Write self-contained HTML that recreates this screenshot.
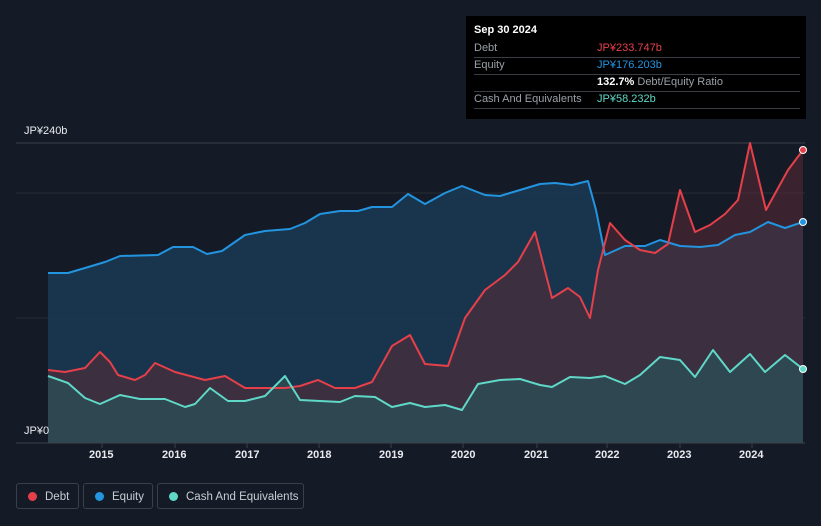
<!DOCTYPE html>
<html><head><style>
body{margin:0;background:#151b26;font-family:"Liberation Sans",sans-serif;}
.wrap{position:relative;width:821px;height:526px;overflow:hidden;background:#151b26}
.tip{position:absolute;left:466px;top:16px;width:340px;height:103px;background:#000;}
.tip .r{position:absolute;left:8px;right:6px;font-size:11px;color:#9aa0a8;border-bottom:1px solid #3a3d42;height:17px;line-height:17px;white-space:nowrap}
.leg{position:absolute;top:483px;height:26px;border:1px solid #3a404b;border-radius:3px;color:#c8cdd4;font-size:11.5px;line-height:26px;box-sizing:border-box;white-space:nowrap}
.leg i{position:absolute;left:11px;top:8px;width:9px;height:9px;border-radius:50%}
.yr{position:absolute;top:449px;color:#e8eaee;font-size:11px;font-weight:bold}
</style></head><body><div class="wrap">
<svg width="821" height="526" style="position:absolute;left:0;top:0">
<line x1="16" y1="143" x2="805" y2="143" stroke="#3a404b"/>
<line x1="16" y1="193" x2="805" y2="193" stroke="#262c37"/>
<line x1="16" y1="318" x2="805" y2="318" stroke="#262c37"/>
<polygon fill="#1a3a55" fill-opacity="0.85" points="48,443 48,273 68,273 85,268 105,262 120,256 158,255 173,247 193,247 207,254 222,251 245,235 265,231 290,229 305,223 320,214 340,211 358,211 372,207 392,207 408,194 425,204 445,193 462,186 485,195 500,196 520,190 540,184 555,183 572,185 588,181 596,210 605,255 625,246 645,246 660,240 680,246 700,247 718,245 735,235 750,232 768,222 785,228 803,222 803,443"/>
<polygon fill="#5a2a35" fill-opacity="0.55" points="48,443 48,370 65,372 85,368 100,352 110,362 118,375 135,380 145,375 155,363 175,372 205,380 225,376 245,388 285,388 300,386 318,380 335,388 355,388 372,382 392,346 410,335 425,364 448,366 465,318 485,290 505,275 518,262 535,232 552,298 568,288 580,297 590,318 598,270 610,223 625,240 640,250 655,253 668,244 680,190 695,232 710,225 725,214 738,200 750,143 766,210 788,170 803,150 803,443"/>
<polygon fill="#2e4a52" fill-opacity="0.9" points="48,443 48,376 68,383 85,398 100,404 120,395 140,399 165,399 185,407 195,404 210,388 228,401 245,401 265,396 285,376 300,400 340,402 355,396 375,397 392,407 410,403 425,407 445,405 462,410 478,384 500,380 520,379 540,385 552,387 570,377 590,378 605,376 625,384 640,375 660,357 680,360 695,377 713,350 730,372 750,354 765,372 785,355 803,369 803,443"/>
<polyline fill="none" stroke="#2394df" stroke-width="2" stroke-linejoin="round" points="48,273 68,273 85,268 105,262 120,256 158,255 173,247 193,247 207,254 222,251 245,235 265,231 290,229 305,223 320,214 340,211 358,211 372,207 392,207 408,194 425,204 445,193 462,186 485,195 500,196 520,190 540,184 555,183 572,185 588,181 596,210 605,255 625,246 645,246 660,240 680,246 700,247 718,245 735,235 750,232 768,222 785,228 803,222"/>
<polyline fill="none" stroke="#e5404a" stroke-width="2" stroke-linejoin="round" points="48,370 65,372 85,368 100,352 110,362 118,375 135,380 145,375 155,363 175,372 205,380 225,376 245,388 285,388 300,386 318,380 335,388 355,388 372,382 392,346 410,335 425,364 448,366 465,318 485,290 505,275 518,262 535,232 552,298 568,288 580,297 590,318 598,270 610,223 625,240 640,250 655,253 668,244 680,190 695,232 710,225 725,214 738,200 750,143 766,210 788,170 803,150"/>
<polyline fill="none" stroke="#5fd8c8" stroke-width="2" stroke-linejoin="round" points="48,376 68,383 85,398 100,404 120,395 140,399 165,399 185,407 195,404 210,388 228,401 245,401 265,396 285,376 300,400 340,402 355,396 375,397 392,407 410,403 425,407 445,405 462,410 478,384 500,380 520,379 540,385 552,387 570,377 590,378 605,376 625,384 640,375 660,357 680,360 695,377 713,350 730,372 750,354 765,372 785,355 803,369"/>
<circle cx="803" cy="150" r="3.5" fill="#e5404a" stroke="#fff" stroke-width="1"/>
<circle cx="803" cy="222" r="3.5" fill="#2394df" stroke="#fff" stroke-width="1"/>
<circle cx="803" cy="369" r="3.5" fill="#5fd8c8" stroke="#fff" stroke-width="1"/>
<line x1="16" y1="443" x2="805" y2="443" stroke="#3a404b"/>
<g stroke="#3a404b"><line x1="102" y1="443" x2="102" y2="448"/><line x1="175" y1="443" x2="175" y2="448"/><line x1="247" y1="443" x2="247" y2="448"/><line x1="319" y1="443" x2="319" y2="448"/><line x1="391" y1="443" x2="391" y2="448"/><line x1="463" y1="443" x2="463" y2="448"/><line x1="537" y1="443" x2="537" y2="448"/><line x1="607" y1="443" x2="607" y2="448"/><line x1="680" y1="443" x2="680" y2="448"/><line x1="752" y1="443" x2="752" y2="448"/></g>
</svg>
<div style="position:absolute;left:24px;top:125px;color:#e8eaee;font-size:11px">JP¥240b</div>
<div style="position:absolute;left:16px;top:425px;width:32px;height:17px;background:#151b26"></div>
<div style="position:absolute;left:24px;top:425px;color:#e8eaee;font-size:11px">JP¥0</div>
<div class="yr" style="left:89px">2015</div><div class="yr" style="left:162px">2016</div><div class="yr" style="left:235px">2017</div><div class="yr" style="left:307px">2018</div><div class="yr" style="left:379px">2019</div><div class="yr" style="left:451px">2020</div><div class="yr" style="left:524px">2021</div><div class="yr" style="left:595px">2022</div><div class="yr" style="left:667px">2023</div><div class="yr" style="left:739px">2024</div>
<div class="tip">
<div style="position:absolute;left:8px;top:8px;color:#fff;font-size:11px;font-weight:bold">Sep 30 2024</div>
<div class="r" style="top:24px">Debt<span style="position:absolute;left:123px;color:#e5404a">JP¥233.747b</span></div>
<div class="r" style="top:41px">Equity<span style="position:absolute;left:123px;color:#2394df">JP¥176.203b</span></div>
<div class="r" style="top:58px"><span style="position:absolute;left:123px"><b style="color:#fff">132.7%</b> Debt/Equity Ratio</span></div>
<div class="r" style="top:75px">Cash And Equivalents<span style="position:absolute;left:123px;color:#5fd8c8">JP¥58.232b</span></div>
</div>
<div class="leg" style="left:16px;width:63px"><i style="background:#e5404a"></i><span style="position:absolute;left:28px">Debt</span></div>
<div class="leg" style="left:83px;width:70px"><i style="background:#2394df"></i><span style="position:absolute;left:28px">Equity</span></div>
<div class="leg" style="left:157px;width:147px"><i style="background:#5fd8c8"></i><span style="position:absolute;left:28px">Cash And Equivalents</span></div>
</div></body></html>
